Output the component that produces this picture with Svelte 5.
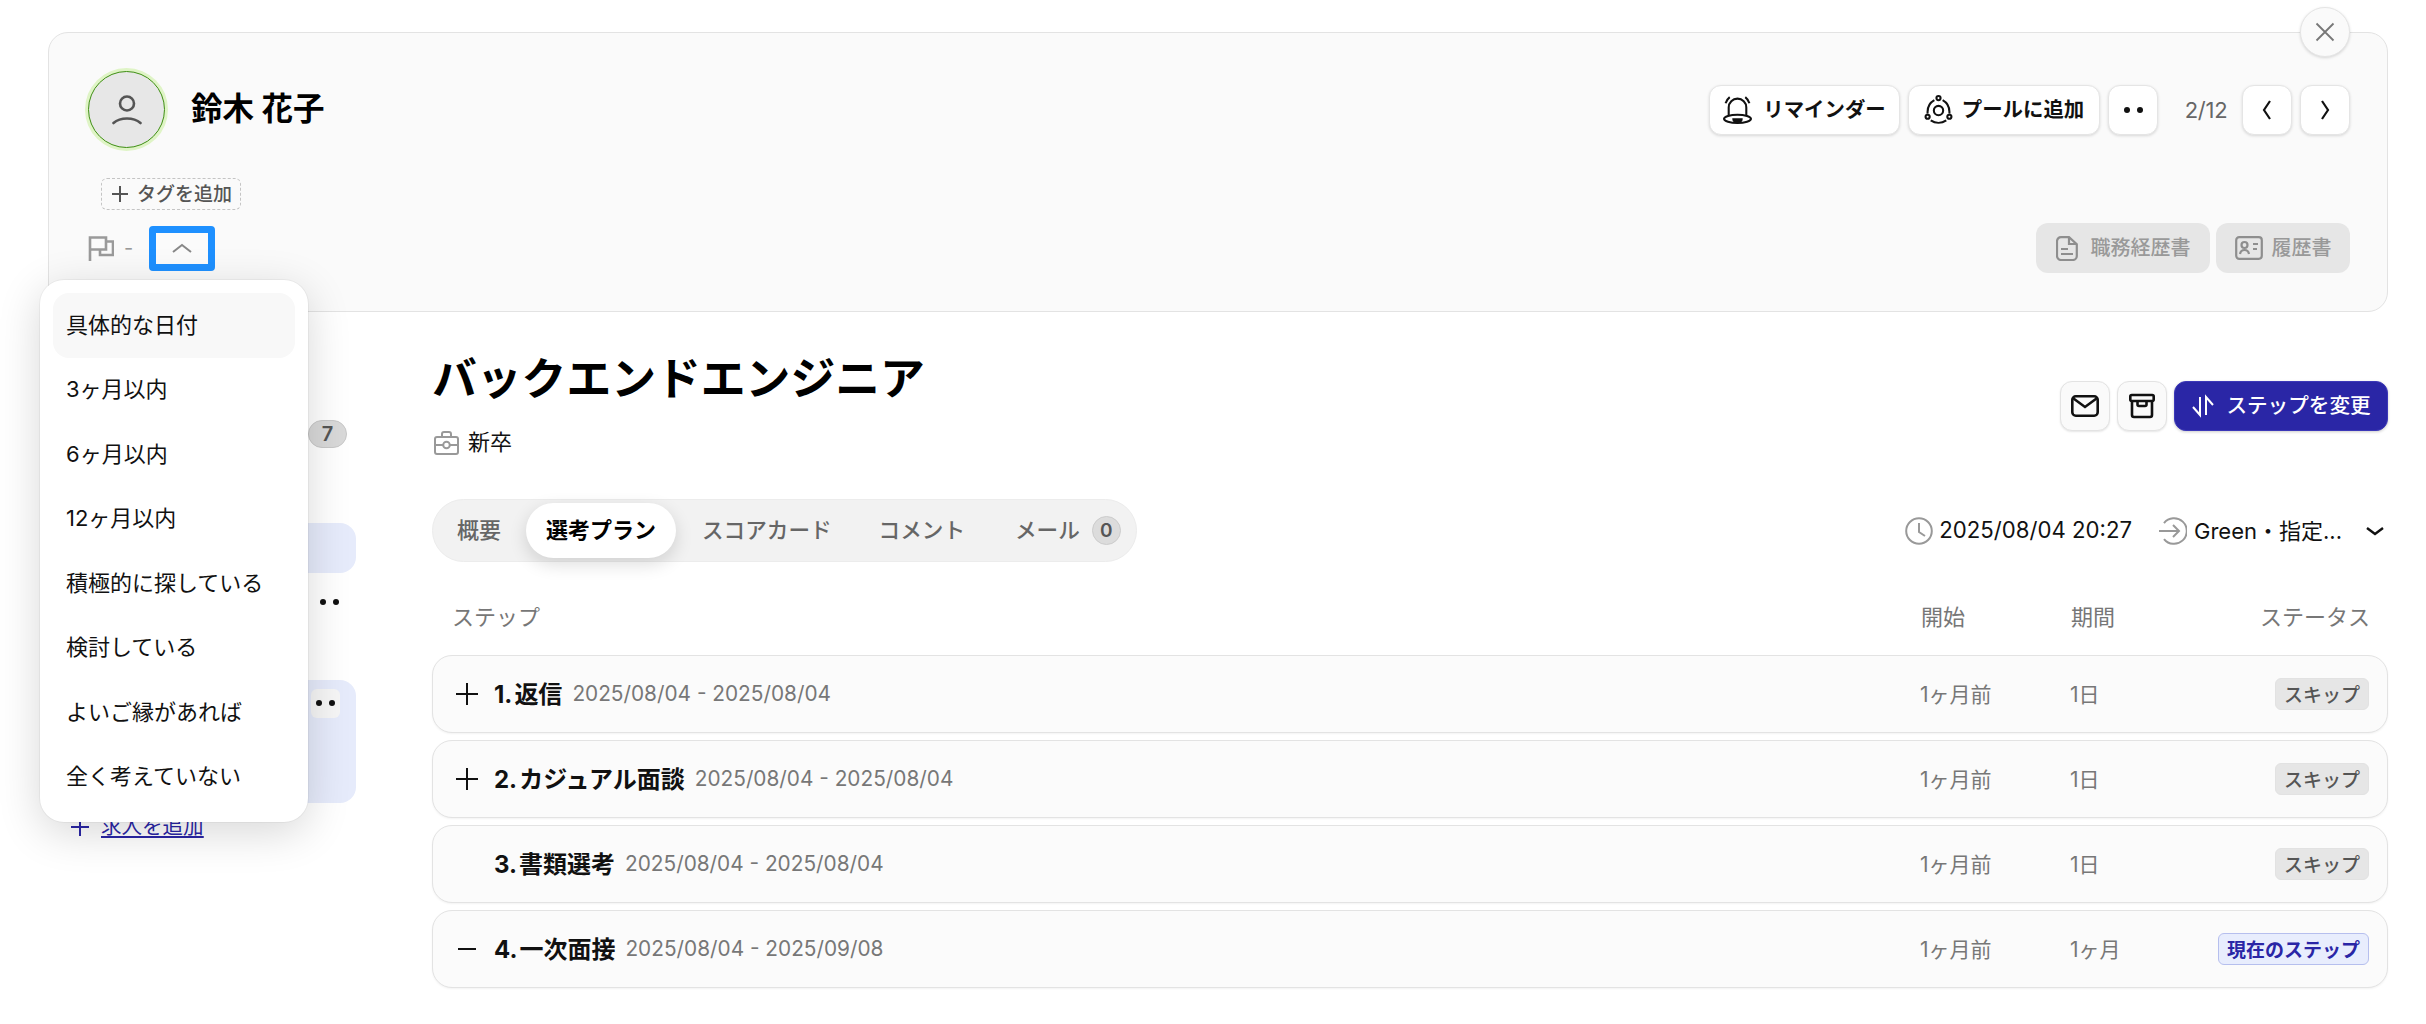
<script>
  const menu = ['具体的な日付','3ヶ月以内','6ヶ月以内','12ヶ月以内','積極的に探している','検討している','よいご縁があれば','全く考えていない'];
  const steps = [
    {n:'1.',t:'返信',d:'2025/08/04 - 2025/08/04',ic:'plus',dur:'1日',s:'スキップ'},
    {n:'2.',t:'カジュアル面談',d:'2025/08/04 - 2025/08/04',ic:'plus',dur:'1日',s:'スキップ'},
    {n:'3.',t:'書類選考',d:'2025/08/04 - 2025/08/04',ic:'',dur:'1日',s:'スキップ'},
    {n:'4.',t:'一次面接',d:'2025/08/04 - 2025/09/08',ic:'minus',dur:'1ヶ月',s:'現在のステップ',cur:true}
  ];
</script>

<div class="page">
  <section class="card">
    <button class="close" aria-label="閉じる">
      <svg width="20" height="20" viewBox="0 0 20 20"><path d="M1.5 1.5l17 17M18.5 1.5l-17 17" stroke="#777" stroke-width="1.8" fill="none"/></svg>
    </button>
    <div class="top">
      <div class="who">
        <div class="avatar">
          <svg width="30" height="30" viewBox="0 0 30 30" fill="none" stroke="#555" stroke-width="2.6" stroke-linecap="round"><circle cx="15" cy="8.500" r="7"/><path d="M1.5 28c3.500-3 8-4.500 13.500-4.500s10 1.500 13.500 4.500"/></svg>
        </div>
        <h2>鈴木 花子</h2>
      </div>
      <div class="acts">
        <button class="btn w191">
          <svg width="29" height="29" viewBox="0 0 28 28" fill="none" stroke="#111" stroke-width="2"><path d="M5.500 20V12a8.500 8.500 0 0117 0v8"/><ellipse cx="14" cy="23" rx="13" ry="4"/><path d="M10 23.500a4 3 0 008 0z" fill="#111"/><path d="M2.500 8c.8-2.500 2-4.500 4-6M25.500 8c-.8-2.500-2-4.500-4-6"/></svg>
          <span class="t">リマインダー</span>
        </button>
        <button class="btn w192">
          <svg width="29" height="29" viewBox="0 0 28 28" fill="none" stroke="#111" stroke-width="2"><circle cx="14" cy="15" r="4.500"/><circle cx="14" cy="3" r="2"/><circle cx="3.500" cy="21" r="2"/><circle cx="24.500" cy="21" r="2"/><path d="M10 5C5.500 7.500 3 12 3.500 18M18 5c4.500 2.500 7 7 6.500 13M6.500 24.500c4.500 3 10.500 3 15 0"/></svg>
          <span class="t">プールに追加</span>
        </button>
        <button class="btn sq" aria-label="その他"><span class="dots"><i></i><i></i></span></button>
        <span class="count">2/12</span>
        <button class="btn sq" aria-label="前へ"><svg width="12" height="24" viewBox="0 0 12 24"><path d="M9 3L3 12l6 9" fill="none" stroke="#111" stroke-width="2.200"/></svg></button>
        <button class="btn sq" aria-label="次へ"><svg width="12" height="24" viewBox="0 0 12 24"><path d="M3 3l6 9-6 9" fill="none" stroke="#111" stroke-width="2.200"/></svg></button>
      </div>
    </div>
    <button class="tag">
      <svg width="20" height="20" viewBox="0 0 20 20"><path d="M10 2v16M2 10h16" stroke="#555" stroke-width="2"/></svg>
      <span class="t2">タグを追加</span>
    </button>
    <div class="third">
      <div class="avail">
        <svg width="26" height="25" viewBox="0 0 26 25" fill="none" stroke="#9a9a9a" stroke-width="2.600"><path d="M2 25V1.500h16v12H2"/><path d="M18 5.500h7V19H12v-5.500"/></svg>
        <span class="dash">-</span>
        <div class="focus">
          <svg width="20" height="10" viewBox="0 0 20 10"><path d="M1 9l9-7 9 7" fill="none" stroke="#888" stroke-width="2"/></svg>
        </div>
      </div>
      <div class="docs">
        <button class="doc">
          <svg width="22" height="25" viewBox="0 0 22 25" fill="none" stroke="#8e8e8e" stroke-width="2.200"><path d="M5 1.200h8l7.800 7V20a4 4 0 01-4 4H5a4 4 0 01-4-4V5.200a4 4 0 014-4z"/><path d="M13 1.200V8h7.800M5 13h7M5 18h12"/></svg>
          <span class="t2">職務経歴書</span>
        </button>
        <button class="doc d2">
          <svg width="28" height="24" viewBox="0 0 28 24" fill="none" stroke="#8e8e8e" stroke-width="2.200"><rect x="1.200" y="1.200" width="25.600" height="21.600" rx="3"/><circle cx="9.500" cy="9" r="3"/><path d="M5 18c.5-3 2-4 4.500-4s4 1 4.500 4M18 8h5M18 13h4"/></svg>
          <span class="t2">履歴書</span>
        </button>
      </div>
    </div>
  </section>

  <div class="body">
    <aside class="side">
      <div class="s-count"><span class="pill">7</span></div>
      <div class="blue b1"></div>
      <div class="s-dots"><span class="dots"><i></i><i></i></span></div>
      <div class="blue b2"><span class="mini"><span class="dots"><i></i><i></i></span></span></div>
      <a class="add" href="#add">
        <svg width="20" height="20" viewBox="0 0 20 20"><path d="M10 1v18M1 10h18" stroke="#2a26a6" stroke-width="2"/></svg>
        <span>求人を追加</span>
      </a>
    </aside>

    <main class="main">
      <div class="job">
        <div>
          <h1>バックエンドエンジニア</h1>
          <div class="sub">
            <svg width="25" height="24" viewBox="0 0 25 24" fill="none" stroke="#999" stroke-width="2"><rect x="1" y="6" width="23" height="17" rx="2"/><path d="M8 6V3a2 2 0 012-2h5a2 2 0 012 2v3M1 14h8M16 14h8"/><circle cx="12.500" cy="14" r="3.300"/></svg>
            <span class="t6">新卒</span>
          </div>
        </div>
        <div class="job-acts">
          <button class="ic" aria-label="メール"><svg width="28" height="22" viewBox="0 0 28 22" fill="none" stroke="#111" stroke-width="2.600"><rect x="1.300" y="1.300" width="25.400" height="19.400" rx="3.500"/><path d="M2.500 3.500L14 12 25.500 3.500"/></svg></button>
          <button class="ic" aria-label="アーカイブ"><svg width="26" height="26" viewBox="0 0 26 26" fill="none" stroke="#111" stroke-width="2.600"><rect x="1.300" y="2" width="23.400" height="6" rx="1.500"/><path d="M3 8v14a2 2 0 002 2h16a2 2 0 002-2V8M8.500 8v3.500a1.500 1.500 0 001.500 1.500h6a1.500 1.500 0 001.500-1.500V8"/></svg></button>
          <button class="primary">
            <svg width="24" height="24" viewBox="0 0 24 24" fill="none" stroke="#fff" stroke-width="2"><path d="M9 3v18L2 13M15 21V3l7 8"/></svg>
            <span class="t">ステップを変更</span>
          </button>
        </div>
      </div>

      <div class="tabrow">
        <div class="tabs">
          <span class="tab t1">概要</span>
          <span class="tab on">選考プラン</span>
          <span class="tab t3">スコアカード</span>
          <span class="tab t4">コメント</span>
          <span class="tab t5">メール</span>
          <span class="zero">0</span>
        </div>
        <div class="meta">
          <svg width="28" height="28" viewBox="0 0 28 28" fill="none" stroke="#999" stroke-width="2"><circle cx="14" cy="14" r="12.800"/><path d="M14 6v9l6 4"/></svg>
          <span class="stamp">2025/08/04 20:27</span>
          <svg class="in" width="28" height="28" viewBox="0 0 28 28" fill="none" stroke="#999" stroke-width="2"><path d="M5 6a12.800 12.800 0 110 16"/><path d="M0 14h20M14 8l6 6-6 6"/></svg>
          <span class="src">Green・指定...</span>
          <svg class="cv" width="18" height="10" viewBox="0 0 18 10"><path d="M1 2l8 6 8-6" fill="none" stroke="#111" stroke-width="2.400"/></svg>
        </div>
      </div>

      <div class="grid head">
        <span>ステップ</span><span>開始</span><span>期間</span><span class="r">ステータス</span>
      </div>
      <div class="rows">
        {#each steps as s}
          <div class="grid row">
            <div class="name">
              <span class="tog">
                {#if s.ic === 'plus'}
                  <svg width="22" height="22" viewBox="0 0 22 22"><path d="M11 0v22M0 11h22" stroke="#111" stroke-width="2"/></svg>
                {:else if s.ic === 'minus'}
                  <svg width="22" height="22" viewBox="0 0 22 22"><path d="M2 11h18" stroke="#111" stroke-width="2"/></svg>
                {/if}
              </span>
              <b><span class="num">{s.n}</span>{s.t}</b>
              <span class="range">{s.d}</span>
            </div>
            <span class="mut">1ヶ月前</span>
            <span class="mut">{s.dur}</span>
            <span class="r"><span class="badge" class:cur={s.cur}>{s.s}</span></span>
          </div>
        {/each}
      </div>
    </main>
  </div>

  <ul class="menu">
    {#each menu as m, i}
      <li class:hov={i === 0}>{m}</li>
    {/each}
  </ul>
</div>

<style>
  :global(body) { margin: 0; background: #fff; overflow: hidden; }
  * { box-sizing: border-box; }
  .page {
    position: relative; width: 2426px; height: 1024px; padding: 32px 38px 0 48px;
    font-family: Inter, "Noto Sans CJK JP", sans-serif; color: #111; overflow: hidden;
  }
  button { font-family: inherit; cursor: pointer; padding: 0; }
  h1, h2 { margin: 0; }
  .t { padding-bottom: 4px; display: block; }
  .t2 { padding-bottom: 3px; display: block; }
  .t6 { padding-bottom: 6px; display: block; }

  .card {
    position: relative; height: 280px; background: #fafafa; border: 1.5px solid #e3e3e3;
    border-radius: 20px; padding: 35px 37px 0 36px;
  }
  .close {
    position: absolute; top: -26px; right: 37px; width: 50px; height: 50px; border-radius: 50%;
    background: #fafafa; border: 1px solid #e5e5e5; box-shadow: 0 1px 3px rgba(0,0,0,.15);
    display: flex; align-items: center; justify-content: center;
  }
  .top { display: flex; justify-content: space-between; align-items: center; height: 83px; }
  .who { display: flex; align-items: center; gap: 23px; }
  .avatar {
    width: 77px; height: 77px; margin: 3px; border-radius: 50%; background: #e7e7e7;
    border: 1.5px solid #3f8f14; box-shadow: 0 0 0 3px #dff4c6;
    display: flex; align-items: center; justify-content: center;
  }
  h2 { font-size: 31.500px; font-weight: 700; color: #000; padding-bottom: 7px; }
  .acts { display: flex; align-items: center; gap: 8px; }
  .btn {
    height: 50px; background: #fff; border: 1px solid #e5e5e5; border-radius: 12px;
    box-shadow: 0 1px 3px rgba(0,0,0,.14); display: flex; align-items: center; justify-content: center;
    gap: 11px; font-size: 20.400px; font-weight: 700; color: #111;
  }
  .w191 { width: 191px; }
  .w192 { width: 192px; gap: 9px; }
  .sq { width: 50px; }
  .dots { display: inline-flex; gap: 7px; }
  .dots i { width: 6px; height: 6px; border-radius: 50%; background: #111; display: block; }
  .count { font-size: 22px; color: #666; margin: 0 0 0 12px; width: 56px; text-align: center; letter-spacing: -.3px; }

  .tag {
    display: flex; align-items: center; gap: 7px; height: 32px; width: 140px; margin: 27px 0 0 16px;
    padding: 0 0 0 8px; background: transparent; border: 1px dashed #c4c4c4; border-radius: 6px;
    font-size: 19px; color: #555; font-weight: 500;
  }
  .third { display: flex; justify-content: space-between; align-items: center; margin-top: 13px; height: 50px; }
  .avail { display: flex; align-items: center; margin-left: 3px; }
  .dash { color: #999; font-size: 20px; margin-left: 10px; width: 25px; }
  .focus {
    width: 66px; height: 45px; border: 7px solid #1e90ff; border-radius: 4px; background: #fbfbfb;
    display: flex; align-items: center; justify-content: center;
  }
  .docs { display: flex; gap: 6px; }
  .doc {
    height: 50px; width: 174px; background: #e6e6e6; border: 0; border-radius: 12px;
    display: flex; align-items: center; justify-content: center; gap: 13px;
    font-size: 20px; font-weight: 500; color: #999;
  }
  .d2 { width: 134px; gap: 9px; }

  .body { display: grid; grid-template-columns: 384px 1fr; }
  .side { width: 308px; }
  .s-count { display: flex; justify-content: flex-end; padding-right: 9px; margin-top: 108px; }
  .pill {
    width: 39px; height: 28px; border-radius: 14px; background: #d9d9d9; border: 1px solid #c8c8c8;
    font-size: 20px; font-weight: 600; color: #555; display: flex; align-items: center; justify-content: center;
  }
  .blue { background: #e6ebfb; border-radius: 16px; }
  .b1 { height: 50px; margin-top: 75px; }
  .s-dots { display: flex; justify-content: flex-end; padding-right: 17px; margin-top: 26px; height: 6px; }
  .b2 { height: 123px; margin-top: 75px; display: flex; justify-content: flex-end; align-items: flex-start; padding: 9px 16px 0 0; }
  .mini {
    width: 29px; height: 29px; border-radius: 6px; background: #f6f6f6;
    display: flex; align-items: center; justify-content: center; padding-bottom: 2px;
  }
  .mini .dots { gap: 7px; }
  .add { display: flex; align-items: center; gap: 11px; margin: 9px 0 0 22px; height: 30px; color: #2a26a6; font-size: 20.500px; }
  .add span { text-decoration: underline; padding-bottom: 4px; }

  .main { padding-top: 41px; min-width: 0; }
  .job { display: flex; justify-content: space-between; align-items: center; }
  h1 { font-size: 44.800px; line-height: 52px; font-weight: 700; color: #000; }
  .sub { display: flex; align-items: center; gap: 9px; margin: 22px 0 0 2px; height: 32px; font-size: 22px; }
  .job-acts { display: flex; gap: 7px; }
  .ic {
    width: 50px; height: 50px; background: #fafafa; border: 1px solid #e3e3e3; border-radius: 12px;
    box-shadow: 0 1px 2px rgba(0,0,0,.1); display: flex; align-items: center; justify-content: center;
  }
  .primary {
    width: 214px; height: 50px; background: #2a26a6; border: 1px solid #3c38b8; border-radius: 12px; color: #fff;
    box-shadow: 0 1px 3px rgba(0,0,0,.2); font-size: 20.600px; font-weight: 500;
    display: flex; align-items: center; justify-content: center; gap: 11px;
  }

  .tabrow { display: flex; justify-content: space-between; align-items: center; margin-top: 40px; }
  .tabs {
    display: flex; align-items: center; width: 705px; height: 63px; background: #f2f2f2;
    border: 1px solid #ececec; border-radius: 32px; font-size: 22px; color: #666; font-weight: 500;
  }
  .tab { padding-bottom: 5px; }
  .t1 { margin-left: 24px; }
  .on {
    margin-left: 25px; width: 150px; height: 55px; border-radius: 28px; background: #fff; color: #000; font-weight: 700;
    display: flex; align-items: center; justify-content: center;
    box-shadow: 0 6px 18px rgba(0,0,0,.14);
  }
  .t3, .t4, .t5 { font-size: 21.600px; }
  .t3 { margin-left: 26px; }
  .t4 { margin-left: 47px; }
  .t5 { margin-left: 50px; }
  .zero {
    margin-left: 12px; width: 29px; height: 29px; border-radius: 50%; background: #dcdcdc; border: 1px solid #ccc;
    font-size: 19px; font-weight: 600; color: #555; display: flex; align-items: center; justify-content: center;
  }
  .meta { display: flex; align-items: center; font-size: 22px; color: #111; }
  .stamp { margin-left: 6px; padding-bottom: 2px; font-size: 22.200px; }
  .in { margin-left: 27px; }
  .src { margin-left: 7px; width: 150px; white-space: nowrap; padding-bottom: 4px; }
  .cv { margin: 0 4px 0 22px; }

  .grid { display: grid; grid-template-columns: 1fr 150px 120px 179px; align-items: center; }
  .head { margin-top: 37px; height: 32px; padding: 0 18px 0 20px; font-size: 22px; color: #777; }
  .r { display: flex; justify-content: flex-end; }
  .rows { display: flex; flex-direction: column; gap: 7px; margin-top: 24px; }
  .row {
    height: 78px; padding: 0 18px 0 23px; background: #fbfbfb; border: 1.5px solid #e3e3e3; border-radius: 20px;
    box-shadow: 0 1px 2px rgba(0,0,0,.05);
  }
  .name { display: flex; align-items: center; }
  .tog { width: 22px; height: 22px; margin-right: 16px; }
  .tog svg { display: block; }
  b { font-size: 24px; font-weight: 700; color: #111; padding-bottom: 3px; }
  .num { margin-right: 2px; }
  .range { margin-left: 10px; font-size: 20.800px; color: #777; padding-bottom: 2px; }
  .mut { font-size: 21px; color: #777; padding-bottom: 3px; }
  .badge {
    height: 32px; padding: 0 8px 2px; border-radius: 6px; background: #e6e6e6; border: 1px solid #e2e2e2;
    font-size: 19px; font-weight: 500; color: #555; display: flex; align-items: center;
  }
  .cur { background: #e8edfd; border-color: #b6bfee; color: #2a26a6; font-weight: 600; }

  .menu {
    position: absolute; left: 40px; top: 280px; width: 268px; height: 542px; margin: 0; padding: 13px;
    list-style: none; background: #fff; border-radius: 24px; z-index: 5;
    box-shadow: 0 0 0 1px rgba(0,0,0,.04), 0 10px 44px rgba(0,0,0,.16);
  }
  .menu li {
    height: 64.500px; padding: 0 0 5px 13px; display: flex; align-items: center; font-size: 22px; color: #111; border-radius: 16px;
  }
  .hov { background: #f8f8f8; }
</style>
